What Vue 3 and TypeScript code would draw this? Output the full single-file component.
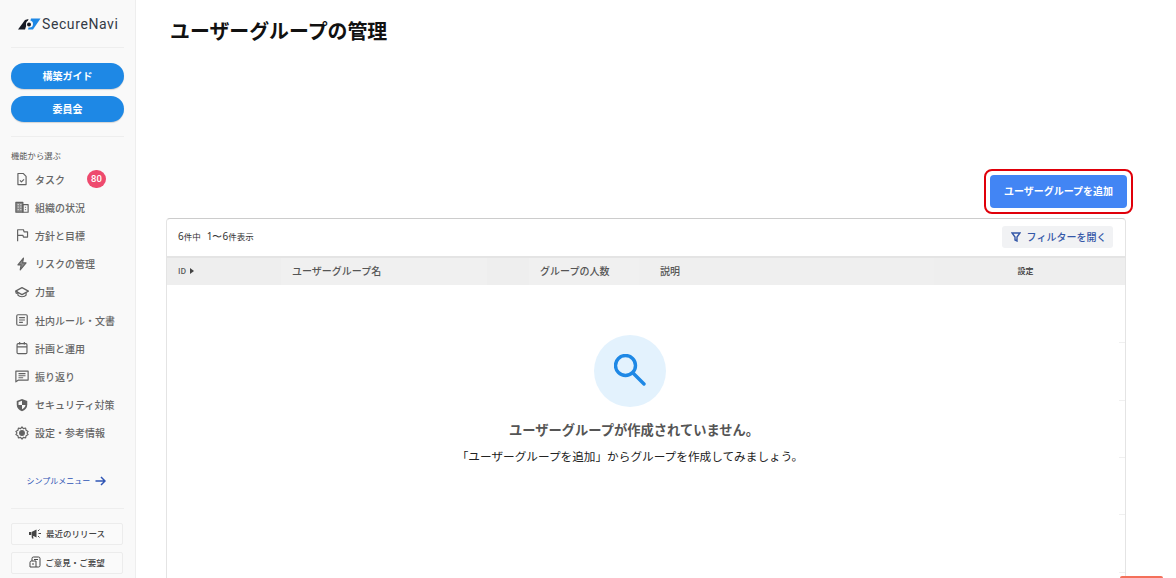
<script setup lang="ts">
interface Item { label: string; icon: string; badge?: string }
const items: Item[] = [
  { label: 'タスク', icon: 'task', badge: '80' },
  { label: '組織の状況', icon: 'org' },
  { label: '方針と目標', icon: 'flag' },
  { label: 'リスクの管理', icon: 'bolt' },
  { label: '力量', icon: 'school' },
  { label: '社内ルール・文書', icon: 'doc' },
  { label: '計画と運用', icon: 'cal' },
  { label: '振り返り', icon: 'note' },
  { label: 'セキュリティ対策', icon: 'shield' },
  { label: '設定・参考情報', icon: 'gear' },
]
const ticks: number[] = [123, 181, 238, 295, 353]
</script>

<template>
  <div class="page">
    <aside class="side">
      <div class="logo">
        <svg width="23" height="12" viewBox="0 0 23 12">
          <path d="M0 11.500 L7 2 L10.500 1 L7 11.500 Z" fill="#161a24" />
          <path d="M13 .5 H22.500 L15 11.500 H10 Z" fill="#1e88e5" />
          <circle cx="11.500" cy="6" r="3.500" fill="#f9f9f9" />
          <circle cx="11" cy="6.500" r="2" fill="#161a24" />
        </svg>
        <span class="logo-text">SecureNavi</span>
      </div>
      <div class="rule"></div>
      <div class="pills">
        <button class="pill">構築ガイド</button>
        <button class="pill">委員会</button>
      </div>
      <div class="rule rule-2"></div>
      <div class="cap">機能から選ぶ</div>
      <nav class="nav">
        <div v-for="it in items" :key="it.label" class="nav-item">
          <svg class="ico" width="14" height="14" viewBox="0 0 24 24" fill="none" stroke="#616161" stroke-width="2" stroke-linejoin="round">
            <template v-if="it.icon === 'task'">
              <path d="M5 2.500h9l5 5v14H5z" /><path d="M8.500 14.500l2.500 2.500 4.500-4.500" />
            </template>
            <template v-else-if="it.icon === 'org'">
              <path d="M1.500 4h12v17h-12z" fill="#8a8a8a" stroke="#616161" /><path d="M13.500 8h9v13h-9z" /><path d="M4.500 8h2M9 8h2M4.500 12h2M9 12h2M4.500 16.500h2M9 16.500h2" stroke="#f9f9f9" stroke-width="1.500" /><path d="M17 12.500h2M17 16.500h2" stroke-width="1.500" />
            </template>
            <template v-else-if="it.icon === 'flag'">
              <path d="M4.500 22.500V3h10l1 3.500h6v9h-7l-1-3H4.500" />
            </template>
            <template v-else-if="it.icon === 'bolt'">
              <path d="M14.500 2L5 13.500h5.500L9 22l10-12h-6z" fill="#8a8a8a" />
            </template>
            <template v-else-if="it.icon === 'school'">
              <path d="M12 4.500L1 10.500l11 6 11-6z" /><path d="M5 13v4.500c2.500 3.500 11.500 3.500 14 0V13" /><circle cx="3" cy="13" r="1.500" />
            </template>
            <template v-else-if="it.icon === 'doc'">
              <rect x="3" y="3" width="18" height="18" rx="2" /><path d="M7 8h10M7 12h10M7 16h6.500" />
            </template>
            <template v-else-if="it.icon === 'cal'">
              <rect x="3.500" y="4.500" width="17" height="17" rx="2" /><path d="M3.500 10h17M8 1.500v4.500M16 1.500v4.500" />
            </template>
            <template v-else-if="it.icon === 'note'">
              <path d="M1.500 3.500h21v15.500H6l-4.500 3z" /><path d="M6 8h12M6 11.500h12M6 15h8" />
            </template>
            <template v-else-if="it.icon === 'shield'">
              <path d="M12 1.500l9 3.500v6.500c0 5.500-3.800 9.300-9 11-5.200-1.700-9-5.500-9-11V5z" fill="#616161" stroke="none" />
              <path d="M12 4.500v7.500H6V7zM12 12h6c-.5 3.500-2.700 5.700-6 7.200z" fill="#f9f9f9" stroke="none" />
            </template>
            <template v-else>
              <path d="M12 1.500l2.300 3 3.900-1 .8 3.900 3.500 2-2 2.600 2 2.600-3.500 2-.8 3.900-3.900-1-2.300 3-2.300-3-3.900 1-.8-3.900-3.500-2 2-2.600-2-2.600 3.500-2 .8-3.900 3.900 1z" /><circle cx="12" cy="12" r="4" fill="#616161" />
            </template>
          </svg>
          <span class="nav-label">{{ it.label }}</span>
          <span v-if="it.badge" class="badge">{{ it.badge }}</span>
        </div>
      </nav>
      <div class="simple">
        <span>シンプルメニュー</span>
        <svg width="11" height="10" viewBox="0 0 11 10" fill="none" stroke="#2f55b5" stroke-width="1.500"><path d="M0.500 5h9M6 1l4 4-4 4" /></svg>
      </div>
      <div class="rule rule-3"></div>
      <div class="foot">
        <button class="foot-btn">
          <svg width="13" height="11" viewBox="0 0 13 11" fill="#444"><path d="M0 4h2v3H0zM2.500 4L7.500 1.500v8L2.500 7zM2.500 7.500h1.500l.5 3H3z" /><path d="M9 3l1.500-1.500M9.500 5.500h2.500M9 8l1.500 1.500" stroke="#444" stroke-width="1" /></svg>
          最近のリリース
        </button>
        <button class="foot-btn">
          <svg width="12" height="12" viewBox="0 0 12 12" fill="none" stroke="#444" stroke-width="1"><path d="M3 5V2.500Q3 1 4.500 1H9.500Q11 1 11 2.500V9.500Q11 11 9.500 11H1V6.500Q1 5 2.500 5H7V11" /><path d="M3 8h2M5 3.500h4" /></svg>
          ご意見・ご要望
        </button>
      </div>
    </aside>
    <main class="main">
      <h1 class="title">ユーザーグループの管理</h1>
      <div class="actions">
        <div class="mark"><button class="add">ユーザーグループを追加</button></div>
      </div>
      <section class="card">
        <div class="bar">
          <div class="count"><b>6</b>件中<b class="range">1〜6</b>件表示</div>
          <button class="filter">
            <svg width="10" height="10" viewBox="0 0 10 10" fill="none" stroke="#3558a8" stroke-width="1.400"><path d="M1 1h8L6 5v4L4 8V5z" /></svg>
            フィルターを開く
          </button>
        </div>
        <div class="thead">
          <div class="th th-id">ID <span class="tri"></span></div>
          <div class="th th-name">ユーザーグループ名</div>
          <div class="th th-gap"></div>
          <div class="th th-num">グループの人数</div>
          <div class="th th-desc">説明</div>
          <div class="th th-set">設定</div>
        </div>
        <div class="empty">
          <div class="circle">
            <svg width="32" height="32" viewBox="0 0 32 32" fill="none" stroke="#1e88e5" stroke-width="3.400" stroke-linecap="round"><circle cx="11.500" cy="11.500" r="10" /><path d="M19 19L30 30" /></svg>
          </div>
          <div class="empty-title">ユーザーグループが作成されていません。</div>
          <div class="empty-sub">「ユーザーグループを追加」からグループを作成してみましょう。</div>
        </div>
        <i v-for="t in ticks" :key="t" class="tick" :style="{ top: t + 'px' }"></i>
      </section>
      <div class="peek"></div>
    </main>
  </div>
</template>

<style>
html, body { margin: 0; height: 100%; overflow: hidden; background: #fff; }
</style>

<style scoped>
.page { display: flex; height: 578px; overflow: hidden; font-family: "Noto Sans CJK JP", "Noto Sans", sans-serif; color: #222; }
.side { width: 136px; box-sizing: border-box; flex: none; background: #f9f9f9; border-right: 1px solid #eeeeee; padding: 0 11px; display: flex; flex-direction: column; }
.logo { height: 47px; display: flex; align-items: center; gap: 1px; padding-left: 7px; box-sizing: border-box; }
.logo-text { font-family: Roboto, sans-serif; font-size: 14px; font-weight: 400; color: #333a45; letter-spacing: .6px; line-height: 1; }
.rule { height: 1px; background: #eeeeee; flex: none; }
.pills { display: flex; flex-direction: column; gap: 7px; padding-top: 15px; }
.pill { height: 26px; border: 0; border-radius: 13px; background: #1e88e5; color: #fff; font: 700 10px/26px "Noto Sans CJK JP", sans-serif; padding: 0; box-shadow: 0 1px 1px rgba(0,0,0,.15); }
.rule-2 { margin-top: 14px; }
.cap { font-size: 8.300px; line-height: 12px; color: #555; margin-top: 12px; }
.nav { margin-top: 4px; display: flex; flex-direction: column; }
.nav-item { height: 28.200px; display: flex; align-items: center; padding-left: 4px; }
.ico { flex: none; margin-right: 6px; }
.nav-label { font-size: 10px; color: #666666; font-weight: 500; white-space: nowrap; }
.badge { width: 19px; height: 18px; border-radius: 9px; background: #ee4a6e; color: #fff; font: 500 9.500px/18px Roboto, sans-serif; text-align: center; margin-left: 22px; }
.simple { display: flex; align-items: center; justify-content: center; gap: 5px; margin-top: 28px; padding-right: 2px; color: #2f55b5; font-size: 8px; line-height: 12px; }
.rule-3 { margin-top: 21px; }
.foot { display: flex; flex-direction: column; gap: 7px; margin-top: 14px; }
.foot-btn { height: 22px; width: 112px; box-sizing: border-box; background: #fafafa; border: 1px solid #ececec; border-radius: 2px; display: flex; align-items: center; justify-content: center; gap: 4px; font: 500 8.500px/1 "Noto Sans CJK JP", sans-serif; color: #444; padding: 0 0 1px; }
.main { flex: 1; min-width: 0; padding: 0 50px 0 30px; position: relative; }
.title { margin: 0; height: 169px; box-sizing: border-box; padding: 17px 0 0 4px; font-size: 19.900px; line-height: 28px; font-weight: 700; color: #111; }
.actions { display: flex; justify-content: flex-end; margin-right: -7px; height: 49px; }
.mark { width: 149px; height: 45px; box-sizing: border-box; border: 2px solid #e0000a; border-radius: 8px; padding: 4px; }
.add { width: 100%; height: 100%; border: 0; border-radius: 4px; background: #4285f4; color: #fff; font: 700 10px/1 "Noto Sans CJK JP", sans-serif; padding: 0 0 1px; }
.card { position: relative; border: 1px solid #e4e4e4; border-top-color: #cccccc; border-bottom: 0; border-radius: 4px 4px 0 0; height: 400px; box-sizing: border-box; }
.bar { height: 37px; display: flex; align-items: center; justify-content: space-between; padding: 0 12px 3px 11px; box-sizing: border-box; }
.count { font-size: 8.500px; color: #333; line-height: 12px; }
.count b { font-family: "Noto Sans", sans-serif; font-weight: 400; font-size: 10px; }
.count .range { margin-left: 6px; }
.filter { width: 111px; height: 22px; box-sizing: border-box; border: 0; border-radius: 3px; background: #f1f2f4; color: #3558a8; font: 500 10px/1 "Noto Sans CJK JP", sans-serif; display: flex; align-items: center; justify-content: center; gap: 6px; padding: 0 0 0 2px; margin-top: 2px; }
.thead { height: 29px; box-sizing: border-box; border-top: 2px solid #e4e4e4; background: #eeeeee; display: grid; grid-template-columns: 114px 206px 42px 110px 295px 1fr; align-items: stretch; }
.th { font-size: 10px; font-weight: 500; color: #555; display: flex; align-items: center; padding-bottom: 2px; box-sizing: border-box; }
.th-id { font-size: 8px; padding-left: 11px; gap: 4px; }
.tri { width: 0; height: 0; border-left: 4px solid #444; border-top: 3px solid transparent; border-bottom: 3px solid transparent; }
.th-name { padding-left: 11px; background: #f0f0f0; }
.th-num { padding-left: 11px; background: #f0f0f0; }
.th-desc { padding-left: 21px; background: #efefef; }
.th-set { font-size: 8px; justify-content: center; padding-right: 8px; color: #333; }
.empty { display: flex; flex-direction: column; align-items: center; padding: 50px 32px 0 0; }
.circle { width: 72px; height: 72px; border-radius: 50%; background: #e3f2fd; display: flex; align-items: center; justify-content: center; padding: 0 1px 2px 0; box-sizing: border-box; }
.empty-title { margin-top: 13px; padding-left: 8px; font-size: 13.270px; line-height: 20px; font-weight: 700; color: #555; }
.empty-sub { margin-top: 7px; font-size: 11.650px; line-height: 18px; color: #222; }
.tick { position: absolute; right: 0; width: 6px; height: 1px; background: #f0f0f0; }
.peek { position: absolute; left: 984px; top: 576px; width: 43px; height: 4px; border-radius: 2px 2px 0 0; background: #f4705a; }
</style>
